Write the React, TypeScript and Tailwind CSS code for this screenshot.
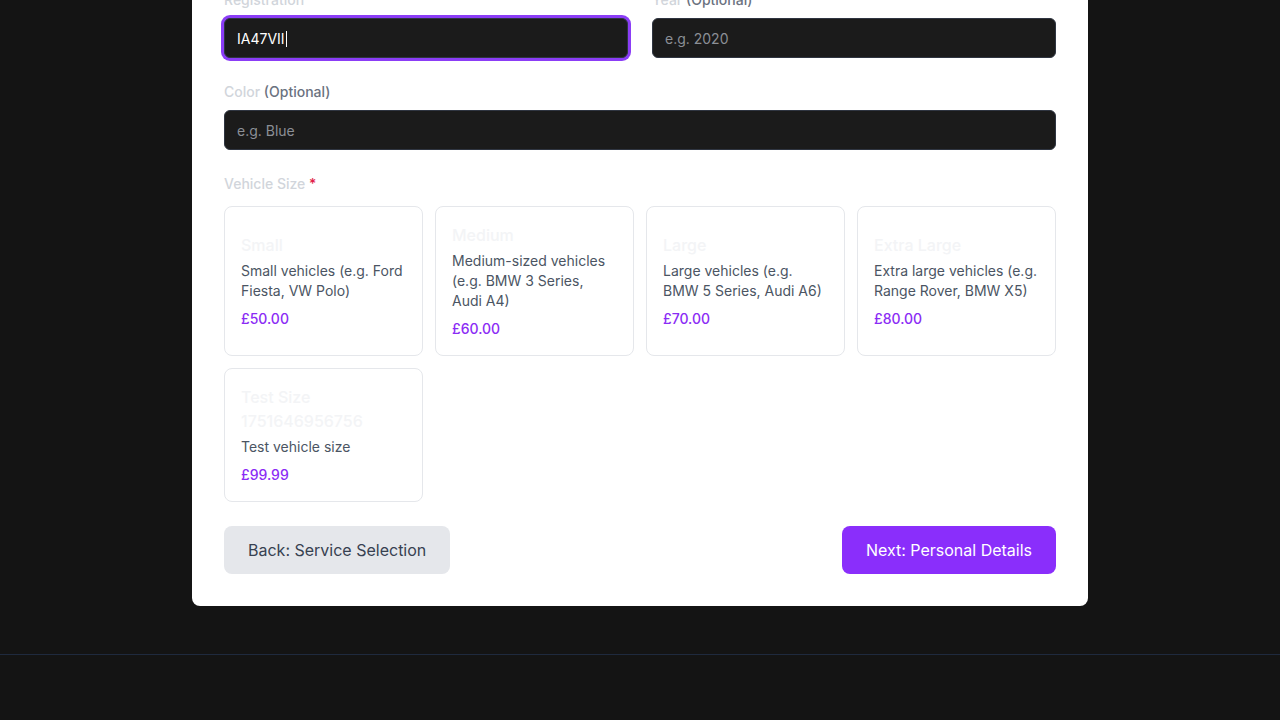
import React from 'react'

const sizes = [
  { name: 'Small', desc: 'Small vehicles (e.g. Ford Fiesta, VW Polo)', price: '£50.00' },
  { name: 'Medium', desc: 'Medium-sized vehicles (e.g. BMW 3 Series, Audi A4)', price: '£60.00' },
  { name: 'Large', desc: 'Large vehicles (e.g. BMW 5 Series, Audi A6)', price: '£70.00' },
  { name: 'Extra Large', desc: 'Extra large vehicles (e.g. Range Rover, BMW X5)', price: '£80.00' },
  { name: 'Test Size 1751646956756', desc: 'Test vehicle size', price: '£99.99' },
]

function Label({ text, optional, required }: { text: string; optional?: boolean; required?: boolean }) {
  return (
    <label className="block text-sm font-medium leading-5 text-[#d1d5db] mb-2">
      {text}
      {optional && <span className="text-[#6b7280]"> (Optional)</span>}
      {required && <span className="text-[#e11d48]"> *</span>}
    </label>
  )
}

function Field({ placeholder }: { placeholder: string }) {
  return (
    <input
      placeholder={placeholder}
      className="w-full h-10 rounded-md border border-[#2f3541] bg-[#1b1b1b] px-3 text-sm text-white placeholder:text-[#8b8f96] focus:outline-none"
    />
  )
}

export default function App() {
  return (
    <div className="min-h-[720px] bg-[#141414] font-['Inter',sans-serif] flex flex-col">
      <div className="w-[896px] mx-auto -mt-[42px] bg-white rounded-lg p-8">
        <div className="flex flex-col gap-6">
          <div className="grid grid-cols-2 gap-6">
            <div>
              <Label text="Registration" required />
              <div className="h-10 rounded-md border border-[#2f3541] bg-[#1b1b1b] px-3 pt-px flex items-center text-sm text-white ring-[3px] ring-[#8b3df6]">
                IA47VII<span className="w-px h-4 bg-white ml-px" />
              </div>
            </div>
            <div>
              <Label text="Year" optional />
              <Field placeholder="e.g. 2020" />
            </div>
          </div>

          <div>
            <Label text="Color" optional />
            <Field placeholder="e.g. Blue" />
          </div>

          <div>
            <label className="block text-sm font-medium leading-5 text-[#d1d5db] mb-3">
              Vehicle Size<span className="text-[#e11d48]"> *</span>
            </label>
            <div className="grid grid-cols-4 gap-3">
              {sizes.map(s => (
                <button key={s.name}
                  className="flex flex-col justify-center text-left p-4 rounded-lg border border-[#e5e7eb] bg-white">
                  <span className="text-base leading-6 font-medium text-[#f3f4f6] mb-1">{s.name}</span>
                  <span className="text-sm leading-5 text-[#4b5563]">{s.desc}</span>
                  <span className="text-sm leading-5 font-medium text-[#8b2cf5] mt-2">{s.price}</span>
                </button>
              ))}
            </div>
          </div>
        </div>

        <div className="flex justify-between mt-6">
          <button className="h-12 px-6 rounded-lg bg-[#e5e7eb] text-base text-[#374151]">
            Back: Service Selection
          </button>
          <button className="h-12 px-6 rounded-lg bg-[#8a2efb] text-base text-white">
            Next: Personal Details
          </button>
        </div>
      </div>

      <footer className="mt-12 flex-1 border-t border-[#1f2a3e] bg-[#141414]" />
    </div>
  )
}
